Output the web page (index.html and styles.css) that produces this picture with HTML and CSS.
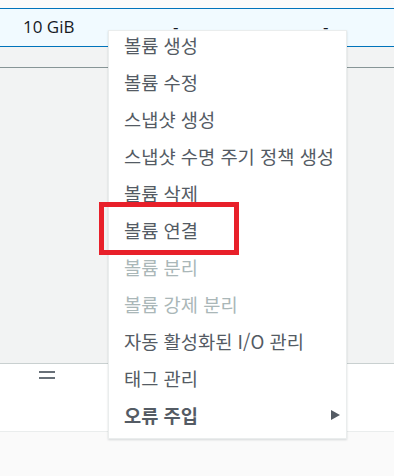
FILE: index.html
```html
<!DOCTYPE html>
<html lang="ko">
<head>
	<meta charset="UTF-8">
	<title>볼륨 작업</title>
	<link rel="stylesheet" href="styles.css">
</head>
<body>
	<div class="table">
		<div class="row selected">
			<span class="cell size">10 GiB</span>
			<span class="cell dash">-</span>
			<span class="cell dash">-</span>
		</div>
		<div class="gap"></div>
		<div class="panel"></div>
		<div class="pane">
			<span class="grip"></span>
		</div>
		<div class="footer"></div>
	</div>

	<ul class="menu">
		<li>볼륨 생성</li>
		<li>볼륨 수정</li>
		<li>스냅샷 생성</li>
		<li>스냅샷 수명 주기 정책 생성</li>
		<li>볼륨 삭제</li>
		<li>볼륨 연결</li>
		<li class="off">볼륨 분리</li>
		<li class="off">볼륨 강제 분리</li>
		<li>자동 활성화된 I/O 관리</li>
		<li>태그 관리</li>
		<li class="sub">오류 주입<span class="arrow"></span></li>
	</ul>

	<div class="mark"></div>
</body>
</html>
```

FILE: styles.css
```css
* {
	margin: 0;
	padding: 0;
	box-sizing: border-box;
}
body {
	width: 394px;
	height: 476px;
	overflow: hidden;
	background: #fafafa;
	font-family: "Open Sans", "Noto Sans CJK KR", sans-serif;
	color: #16191f;
	padding-top: 8px;
}
.table {
	display: flex;
	flex-direction: column;
}
.row.selected {
	display: grid;
	grid-template-columns: 150px 150px 1fr;
	height: 39px;
	background: #f1faff;
	border-top: 1px solid #0073bb;
	border-bottom: 1px solid #0073bb;
	font-size: 17px;
	line-height: 36px;
}
.cell.size {
	padding-left: 23px;
}
.cell.dash {
	padding-left: 23px;
}
.gap {
	height: 21px;
	background: #f2f3f3;
	border-bottom: 1px solid #879596;
}
.panel {
	height: 296px;
	background: #f2f3f3;
	border-bottom: 1px solid #c9d0d0;
}
.pane {
	height: 68px;
	background: #fff;
	border-bottom: 1px solid #eaeded;
	padding: 7px 0 0 39px;
}
.grip {
	display: block;
	width: 16px;
	height: 8px;
	border-top: 2px solid #687078;
	border-bottom: 2px solid #687078;
}
.footer {
	height: 50px;
	background: #fafafa;
}

.menu {
	position: absolute;
	left: 108px;
	top: 30px;
	width: 239px;
	height: 409px;
	list-style: none;
	background: #fff;
	border: 1px solid #eaeded;
	box-shadow: 0 1px 2px rgba(0, 28, 36, 0.15);
	padding-left: 15px;
	font-family: "Noto Sans CJK KR", sans-serif;
	font-size: 18.7px;
	color: #545b64;
}
.menu li {
	height: 37px;
	line-height: 28px;
	white-space: nowrap;
}
.menu li.off {
	color: #aab7b8;
}
.menu li.sub {
	position: relative;
	font-weight: bold;
}
.arrow {
	position: absolute;
	right: 6px;
	top: 9px;
	width: 0;
	height: 0;
	border-top: 5px solid transparent;
	border-bottom: 5px solid transparent;
	border-left: 9px solid #545b64;
}

.mark {
	position: absolute;
	left: 99px;
	top: 202px;
	width: 140px;
	height: 53px;
	border: 5px solid #e8202a;
}
```
